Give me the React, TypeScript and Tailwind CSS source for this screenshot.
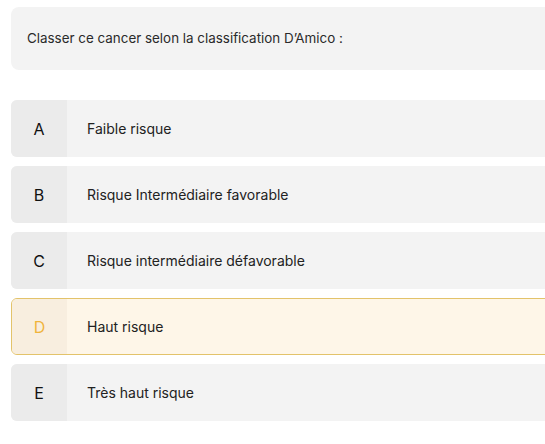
const options = [
  { letter: "A", label: "Faible risque" },
  { letter: "B", label: "Risque Intermédiaire favorable" },
  { letter: "C", label: "Risque intermédiaire défavorable" },
  { letter: "D", label: "Haut risque", selected: true },
  { letter: "E", label: "Très haut risque" },
]

export default function App() {
  return (
    <div className="w-screen h-screen overflow-hidden bg-white" style={{ fontFamily: "Inter, 'Noto Sans', sans-serif" }}>
      <div className="w-[560px] pl-[11px] pt-[7px]">
        <div className="h-[63px] rounded-lg bg-[#f3f3f3] flex items-center px-4 text-[13.4px] text-[#2a2a2a]">
          Classer ce cancer selon la classification D’Amico :
        </div>

        <div className="mt-[30px] flex flex-col gap-[9px]">
          {options.map((o) =>
            o.selected ? (
              <div
                key={o.letter}
                className="h-[57px] rounded-md border border-[#e3c36a] bg-[#fef6e8] flex items-stretch overflow-hidden"
              >
                <div className="w-[55px] flex items-center justify-center bg-[#f8eedf] text-[16px] text-[#f0b43c]">
                  {o.letter}
                </div>
                <div className="flex items-center pl-5 text-[14px] text-[#222]">{o.label}</div>
              </div>
            ) : (
              <div key={o.letter} className="h-[57px] rounded-md bg-[#f3f3f3] flex items-stretch overflow-hidden">
                <div className="w-[56px] flex items-center justify-center bg-[#ebebeb] text-[16px] text-[#111]">
                  {o.letter}
                </div>
                <div className="flex items-center pl-5 text-[14px] text-[#222]">{o.label}</div>
              </div>
            )
          )}
        </div>
      </div>
    </div>
  )
}
